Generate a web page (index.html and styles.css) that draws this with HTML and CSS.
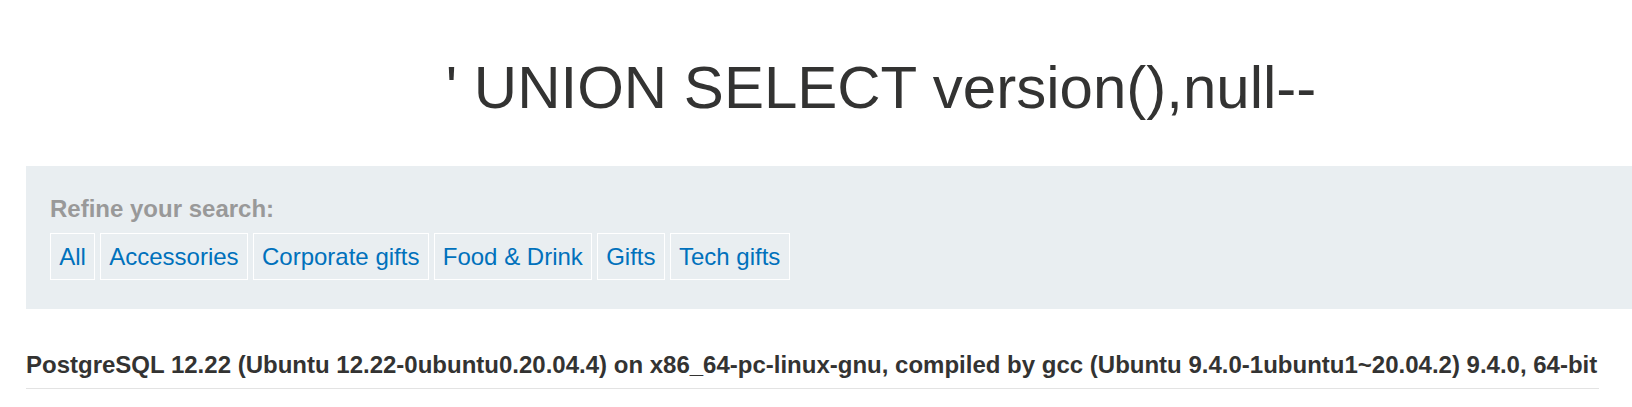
FILE: index.html
```html
<!DOCTYPE html>
<html lang="en">
<head>
<meta charset="utf-8">
<title>Search results</title>
<link rel="stylesheet" href="styles.css">
</head>
<body>
<div class="page">
  <h1 class="search-title">' UNION SELECT version(),null--</h1>
  <section class="filter">
    <div class="filter-label">Refine your search:</div>
    <div class="filter-list">
      <a class="filter-item" href="#">All</a>
      <a class="filter-item" href="#">Accessories</a>
      <a class="filter-item" href="#">Corporate gifts</a>
      <a class="filter-item" href="#">Food &amp; Drink</a>
      <a class="filter-item" href="#">Gifts</a>
      <a class="filter-item" href="#">Tech gifts</a>
    </div>
  </section>
  <table class="results">
    <tbody>
      <tr><th>PostgreSQL 12.22 (Ubuntu 12.22-0ubuntu0.20.04.4) on x86_64-pc-linux-gnu, compiled by gcc (Ubuntu 9.4.0-1ubuntu1~20.04.2) 9.4.0, 64-bit</th></tr>
    </tbody>
  </table>
</div>
</body>
</html>
```

FILE: styles.css
```css
html, body {
  margin: 0;
  padding: 0;
  background: #ffffff;
}

body {
  font-family: Arial, "Liberation Sans", Helvetica, sans-serif;
  color: #333332;
  font-size: 24px;
}

.page {
  padding-left: 26px;
  overflow: hidden;
}

.search-title {
  margin: 53px 0 0;
  padding-left: 104px;
  text-align: center;
  font-size: 60px;
  font-weight: normal;
  line-height: normal;
  color: #333332;
  white-space: nowrap;
}

.filter {
  margin-top: 44px;
  background: #e9eef1;
  padding: 29px 24px 29px 24px;
}

.filter-label {
  font-weight: bold;
  color: #999999;
  line-height: normal;
}

.filter-list {
  display: flex;
  gap: 5px;
  margin-top: 10px;
}

.filter-item {
  display: block;
  border: 1px solid #ffffff;
  padding: 8.5px 8.2px;
  line-height: normal;
  color: #0071bc;
  text-decoration: none;
}

.results {
  margin-top: 42px;
  border-collapse: collapse;
}

.results th {
  text-align: left;
  font-weight: bold;
  padding: 0 2px 9px 0;
  line-height: normal;
  border-bottom: 1px solid #e3e3e3;
  white-space: nowrap;
}
```
